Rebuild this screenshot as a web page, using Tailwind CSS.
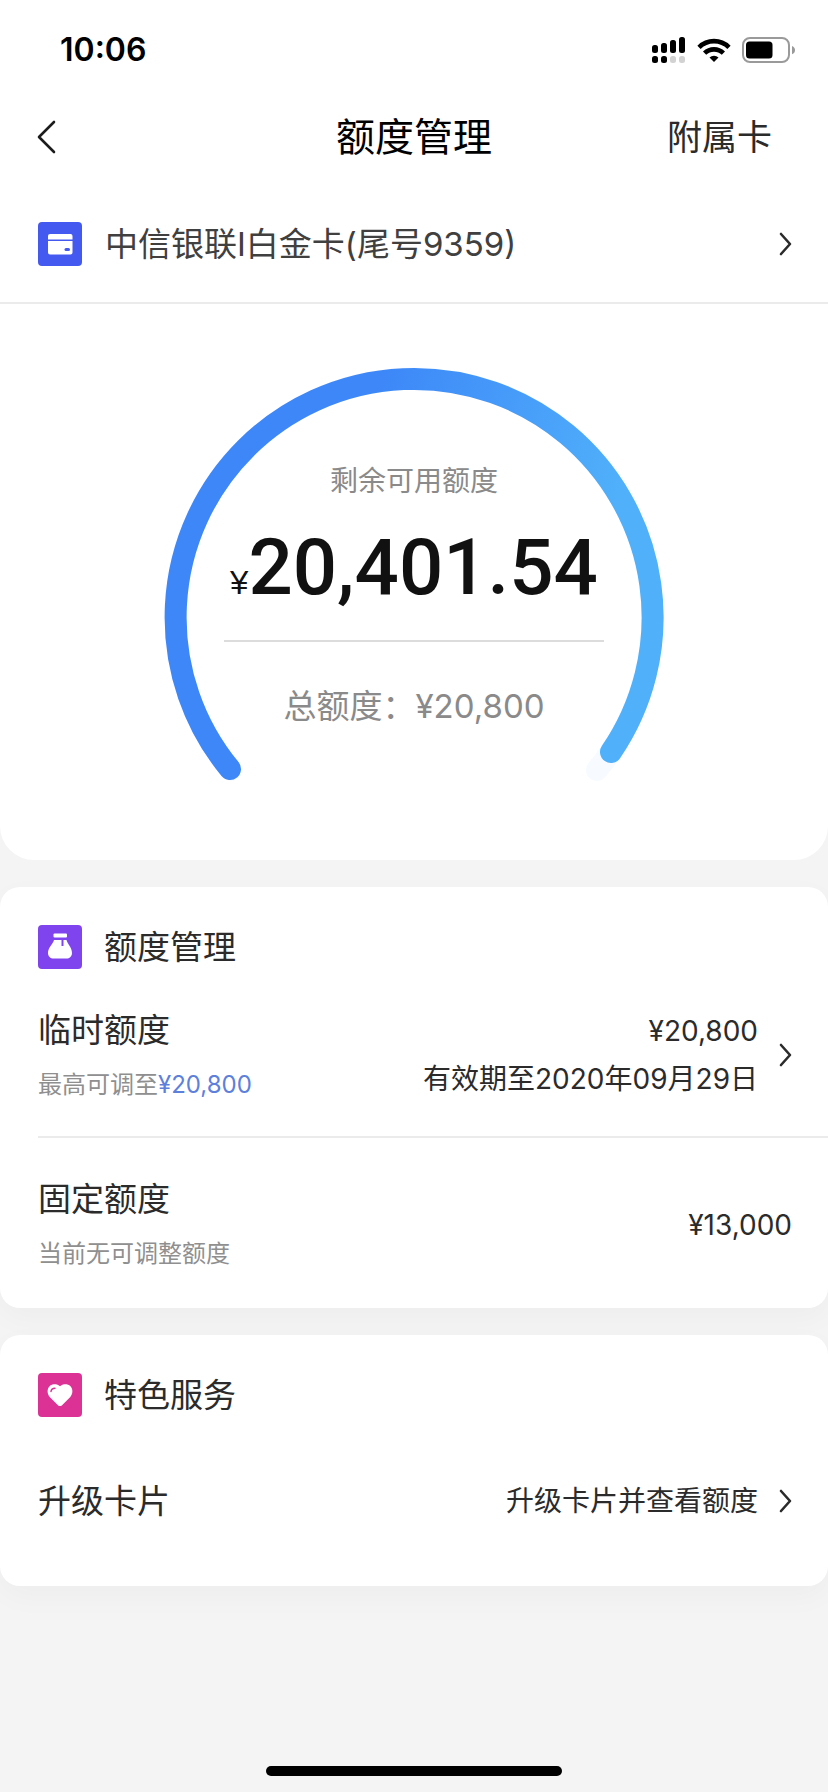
<!DOCTYPE html>
<html lang="zh-CN">
<head>
<meta charset="utf-8">
<meta name="viewport" content="width=device-width, initial-scale=1">
<title>额度管理</title>
<script src="https://cdn.jsdelivr.net/npm/@tailwindcss/browser@4"></script>
</head>
<body class="flex min-h-screen flex-col bg-[#f4f4f4] font-['Inter','Noto_Sans_CJK_SC',sans-serif] text-[33px] leading-[44px] text-[#2b2b2b]">
  <header class="bg-white">
    <div class="flex h-[89px] items-center justify-between pt-[10px] pr-[32px] pl-[60px] text-black">
      <span class="text-[32px] leading-[40px] font-semibold">10:06</span>
      <div class="flex items-center gap-[11px]">
        <svg class="h-[28px] w-[34px]" viewBox="0 0 34 28" aria-hidden="true">
          <rect x="0" y="9" width="6" height="8" rx="2.500"/>
          <rect x="9" y="7" width="6" height="10" rx="2.500"/>
          <rect x="18" y="4" width="6" height="13" rx="2.500"/>
          <rect x="27" y="1" width="6" height="16" rx="2.500"/>
          <rect x="0" y="20" width="6" height="7" rx="2.500"/>
          <rect x="9" y="20" width="6" height="7" rx="2.500"/>
          <rect x="18" y="20" width="6" height="7" rx="2.500" fill="#d2d2d2"/>
          <rect x="27" y="20" width="6" height="7" rx="2.500" fill="#d2d2d2"/>
        </svg>
        <svg class="h-[24px] w-[34px]" viewBox="0 0 34 24" fill="none" stroke="#000" stroke-width="4.600" aria-hidden="true">
          <path d="M2 9.300a21.300 21.300 0 0 1 30 0"/>
          <path d="M7.600 15.200a13.400 13.400 0 0 1 18.800 0"/>
          <path d="M17 24l-4.500-4.500a6.600 6.600 0 0 1 9 0z" fill="#000" stroke="none"/>
        </svg>
        <svg class="h-[26px] w-[54px]" viewBox="0 0 54 26" aria-hidden="true">
          <rect x="1" y="1" width="46" height="24" rx="7" fill="none" stroke="#9a9a9a" stroke-width="2"/>
          <rect x="4" y="4.500" width="26.500" height="17" rx="3.500"/>
          <path d="M50 9c4 1.300 4 7 0 8.300z" fill="#9a9a9a"/>
        </svg>
      </div>
    </div>
    <nav class="grid h-[96px] grid-cols-[1fr_auto_1fr] items-center pr-[56px] pl-[37px]">
      <button type="button" aria-label="返回" class="justify-self-start">
        <svg class="h-[34px] w-[20px]" viewBox="0 0 20 34" fill="none" stroke="#1c1c1c" stroke-width="2.600" stroke-linecap="round" stroke-linejoin="round"><path d="M17 2L2 17l15 15"/></svg>
      </button>
      <h1 class="pl-[19px] text-[39px] leading-[52px] font-normal text-black">额度管理</h1>
      <a href="#" class="justify-self-end text-[35px]">附属卡</a>
    </nav>
    <a href="#" class="flex h-[119px] items-center border-b-2 border-[#ebebeb] pr-[36px] pl-[38px]">
      <svg class="h-[44px] w-[44px]" viewBox="0 0 44 44" aria-hidden="true">
        <rect width="44" height="44" rx="4" fill="#4459f0"/>
        <path d="M12 12h20.500a2 2 0 0 1 2 2v3.500H10V14a2 2 0 0 1 2-2zM10 19h24.500v11.500a2 2 0 0 1-2 2H12a2 2 0 0 1-2-2z" fill="#fff"/>
        <rect x="26.500" y="26" width="5.500" height="3" rx="1.500" fill="#4459f0"/>
      </svg>
      <span class="ml-[23px] flex-1 text-[#404040]">中信银联I白金卡(尾号9359)</span>
      <svg class="h-[24px] w-[14px]" viewBox="0 0 14 24" fill="none" stroke="#2b2b2b" stroke-width="2.600" stroke-linecap="round" stroke-linejoin="round" aria-hidden="true"><path d="M3 2l9 10-9 10"/></svg>
    </a>
  </header>

  <main class="flex flex-col gap-[27px]">
    <section class="grid justify-center rounded-b-[34px] bg-white pt-[63px] pb-[63px]">
      <svg class="col-start-1 row-start-1 h-[430px] w-[500px]" viewBox="0 0 500 430" fill="none" stroke-width="22" stroke-linecap="round" aria-hidden="true">
        <defs>
          <linearGradient id="arc" gradientUnits="userSpaceOnUse" x1="220" y1="0" x2="470" y2="70">
            <stop offset="0" stop-color="#3d87f8"/>
            <stop offset="1" stop-color="#50b0fa"/>
          </linearGradient>
        </defs>
        <path d="M67 403A238.500 238.500 0 1 1 433 403" stroke="#f7fbff"/>
        <path d="M66 402A238.500 238.500 0 1 1 447 385" stroke="url(#arc)"/>
      </svg>
      <div class="col-start-1 row-start-1 flex flex-col items-center pt-[94px] text-[#8a8a8a]">
        <p class="text-[28px] leading-[40px]">剩余可用额度</p>
        <p class="mt-[22px] flex items-baseline font-['Roboto'] text-[78px] leading-[90px] font-medium text-[#111]"><span class="font-['Liberation_Sans'] text-[33px] font-normal">¥</span>20,401.54</p>
        <div class="mt-[12px] h-[2px] w-[380px] bg-[#dcdcdc]"></div>
        <p class="mt-[42px] text-[33px]">总额度：¥20,800</p>
      </div>
    </section>

    <section class="rounded-[20px] bg-white pt-[38px] pb-[36px] shadow-[0_10px_30px_rgba(0,0,0,0.03)]">
      <h2 class="flex items-center gap-[22px] pl-[38px] font-normal">
        <svg class="h-[44px] w-[44px]" viewBox="0 0 44 44" aria-hidden="true">
          <rect width="44" height="44" rx="4" fill="#8044ee"/>
          <rect x="15.500" y="8.500" width="13.500" height="4" rx="1" fill="#fff"/>
          <path d="M16 15h7.500v6h2v-6h3c1 4 5.500 7.500 5.500 13 0 3.500-2.500 5.500-5.500 5.500H15.500c-3 0-5.500-2-5.500-5.500 0-5.500 5-9 6-13z" fill="#fff"/>
        </svg>
        额度管理
      </h2>
      <a href="#" class="ml-[38px] flex items-center border-b-2 border-[#ebebeb] pt-[38px] pr-[36px] pb-[33px]">
        <div class="flex-1">
          <p>临时额度</p>
          <p class="mt-[15px] text-[24px] leading-[36px] text-[#8f8f8f]">最高可调至<span class="text-[#5c80dc]">¥20,800</span></p>
        </div>
        <p class="text-right text-[28px] leading-[48px]">¥20,800<br>有效期至2020年09月29日</p>
        <svg class="ml-[20px] h-[24px] w-[14px]" viewBox="0 0 14 24" fill="none" stroke="#2b2b2b" stroke-width="2.600" stroke-linecap="round" stroke-linejoin="round" aria-hidden="true"><path d="M3 2l9 10-9 10"/></svg>
      </a>
      <div class="ml-[38px] flex items-center pt-[39px] pr-[36px]">
        <div class="flex-1">
          <p>固定额度</p>
          <p class="mt-[15px] text-[24px] leading-[36px] text-[#8f8f8f]">当前无可调整额度</p>
        </div>
        <p class="text-[28px]">¥13,000</p>
      </div>
    </section>

    <section class="rounded-[20px] bg-white pt-[38px] pb-[63px] shadow-[0_10px_30px_rgba(0,0,0,0.03)]">
      <h2 class="flex items-center gap-[22px] pl-[38px] font-normal">
        <svg class="h-[44px] w-[44px]" viewBox="0 0 44 44" aria-hidden="true">
          <rect width="44" height="44" rx="4" fill="#dc3296"/>
          <path d="M22 33c-1 0-1.800-.5-2.800-1.500l-7-7C9 21 8.800 16 11.500 13.200c2-2 5-2.400 7.500-1.700 1.200.4 2 .9 3 1.700 1-.8 1.800-1.300 3-1.700 2.500-.7 5.500-.3 7.500 1.700 2.700 2.800 2.500 7.800-.7 11.300l-7 7c-1 1-1.800 1.500-2.800 1.500z" fill="#fff"/>
          <path d="M13 18.500c.2-2 1.800-3.300 4-3.300" stroke="#dc3296" stroke-width="1.500" stroke-linecap="round" fill="none"/>
        </svg>
        特色服务
      </h2>
      <a href="#" class="mt-[62px] flex items-center pr-[36px] pl-[38px]">
        <span class="flex-1">升级卡片</span>
        <span class="text-[28px]">升级卡片并查看额度</span>
        <svg class="ml-[20px] h-[24px] w-[14px]" viewBox="0 0 14 24" fill="none" stroke="#2b2b2b" stroke-width="2.600" stroke-linecap="round" stroke-linejoin="round" aria-hidden="true"><path d="M3 2l9 10-9 10"/></svg>
      </a>
    </section>
  </main>

  <div class="mt-auto flex justify-center pb-[16px]">
    <div class="h-[10px] w-[296px] rounded-full bg-black"></div>
  </div>
</body>
</html>
